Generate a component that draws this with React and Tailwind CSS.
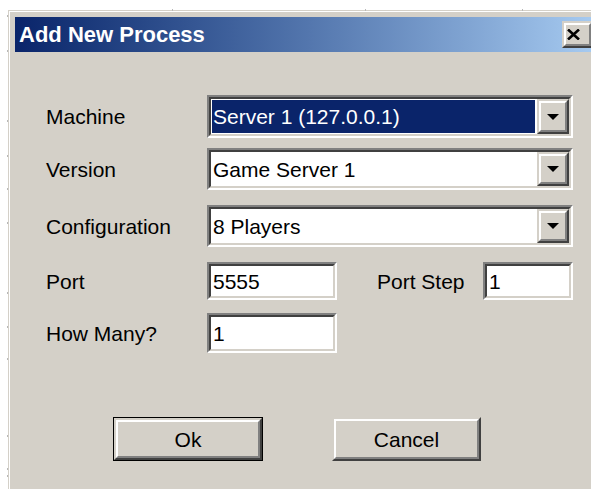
import React from 'react';

// Classic 3D edges
const sunkenOuter = "border-2 border-t-[#808080] border-l-[#808080] border-b-white border-r-white";
const sunkenInner = "border-2 border-t-[#404040] border-l-[#404040] border-b-[#d4d0c8] border-r-[#d4d0c8]";
const raisedOuter = "border-2 border-t-[#d4d0c8] border-l-[#d4d0c8] border-b-[#404040] border-r-[#404040]";
const raisedInner = "border-2 border-t-white border-l-white border-b-[#808080] border-r-[#808080]";

const ComboBox = ({ value, selected = false, h }) => (
  <div className={`${sunkenOuter} w-[366px] ${h}`}>
    <div className={`${sunkenInner} h-full bg-white flex items-stretch`}>
      <div className="flex-1 flex items-stretch py-[1px] pl-[1px] pr-[2px]">
        <div className={`flex-1 flex items-center pl-[1px] ${selected ? 'bg-[#0a246a] text-white' : 'text-black'}`}>
          {value}
        </div>
      </div>
      <div className={`${raisedOuter} w-[32px]`}>
        <div className={`${raisedInner} h-full bg-[#d4d0c8] flex items-center justify-center`}>
          <svg width="12" height="6" viewBox="0 0 12 6">
            <polygon points="0,0 12,0 6,6" fill="#000" />
          </svg>
        </div>
      </div>
    </div>
  </div>
);

const TextBox = ({ value, w, h }) => (
  <div className={`${sunkenOuter} ${w} ${h}`}>
    <div className={`${sunkenInner} h-full bg-white flex items-center pl-[2px] text-black`}>
      {value}
    </div>
  </div>
);

const Button = ({ label, isDefault = false, w }) => (
  <div className={`${w} h-[44px] ${isDefault ? 'border border-black' : ''}`}>
    <div className={`${raisedOuter} h-full`}>
      <div className={`${raisedInner} h-full bg-[#d4d0c8] flex items-center justify-center text-black`}>
        {label}
      </div>
    </div>
  </div>
);

const Label = ({ children }) => (
  <div className="w-[161px] shrink-0 text-black">{children}</div>
);

const ticks = [
  [7, 15], [7, 50], [7, 120], [7, 155], [7, 188], [7, 222], [7, 292], [7, 326], [7, 358], [7, 435], [7, 468], [7, 475],
  [172, 9], [365, 9], [522, 9],
];

export default function App() {
  return (
    <div className="relative w-[591px] h-[489px] overflow-hidden bg-white font-['Liberation_Sans',Arial,sans-serif] text-[21px] leading-none">
      {ticks.map(([x, y], i) => (
        <span
          key={i}
          className="absolute w-[1px] h-[2px] bg-[#b8b8b8]"
          style={{ left: x, top: y }}
        />
      ))}

      <div className="pl-[8px] pt-[10px]">
        <div className="w-[592px] h-[500px] border border-[#d4d0c8] bg-[#d4d0c8]">
          <div className="h-full border border-white bg-[#d4d0c8]">
            {/* Caption */}
            <div className="mx-[5px] mt-[5px] h-[35px] flex items-center bg-gradient-to-r from-[#0a246a] to-[#a6caf0]">
              <span className="pl-[4px] text-white font-bold text-[22px]">Add New Process</span>
              <div className={`ml-auto w-[31px] h-[27px] ${raisedOuter}`}>
                <div className={`${raisedInner} h-full bg-[#d4d0c8] flex items-center pl-[1px]`}>
                  <svg width="13" height="11" viewBox="0 0 13 11">
                    <path d="M1 0.5 L12 10.5 M12 0.5 L1 10.5" stroke="#000" strokeWidth="2.6" />
                  </svg>
                </div>
              </div>
            </div>

            {/* Form */}
            <div className="pl-[36px] flex flex-col">
              <div className="mt-[43px] flex items-center">
                <Label>Machine</Label>
                <ComboBox value="Server 1 (127.0.0.1)" selected h="h-[43px]" />
              </div>
              <div className="mt-[10px] flex items-center">
                <Label>Version</Label>
                <ComboBox value="Game Server 1" h="h-[42px]" />
              </div>
              <div className="mt-[15px] flex items-center">
                <Label>Configuration</Label>
                <ComboBox value="8 Players" h="h-[42px]" />
              </div>
              <div className="mt-[15px] flex items-center">
                <Label>Port</Label>
                <TextBox value="5555" w="w-[130px]" h="h-[38px]" />
                <span className="ml-[40px] w-[106px] text-black">Port Step</span>
                <TextBox value="1" w="w-[90px]" h="h-[38px]" />
              </div>
              <div className="mt-[13px] flex items-center">
                <Label>How Many?</Label>
                <TextBox value="1" w="w-[130px]" h="h-[40px]" />
              </div>
              <div className="mt-[64px] flex items-center pl-[67px] gap-[69px]">
                <Button label="Ok" isDefault w="w-[150px]" />
                <Button label="Cancel" w="w-[149px]" />
              </div>
            </div>
          </div>
        </div>
      </div>
    </div>
  );
}
